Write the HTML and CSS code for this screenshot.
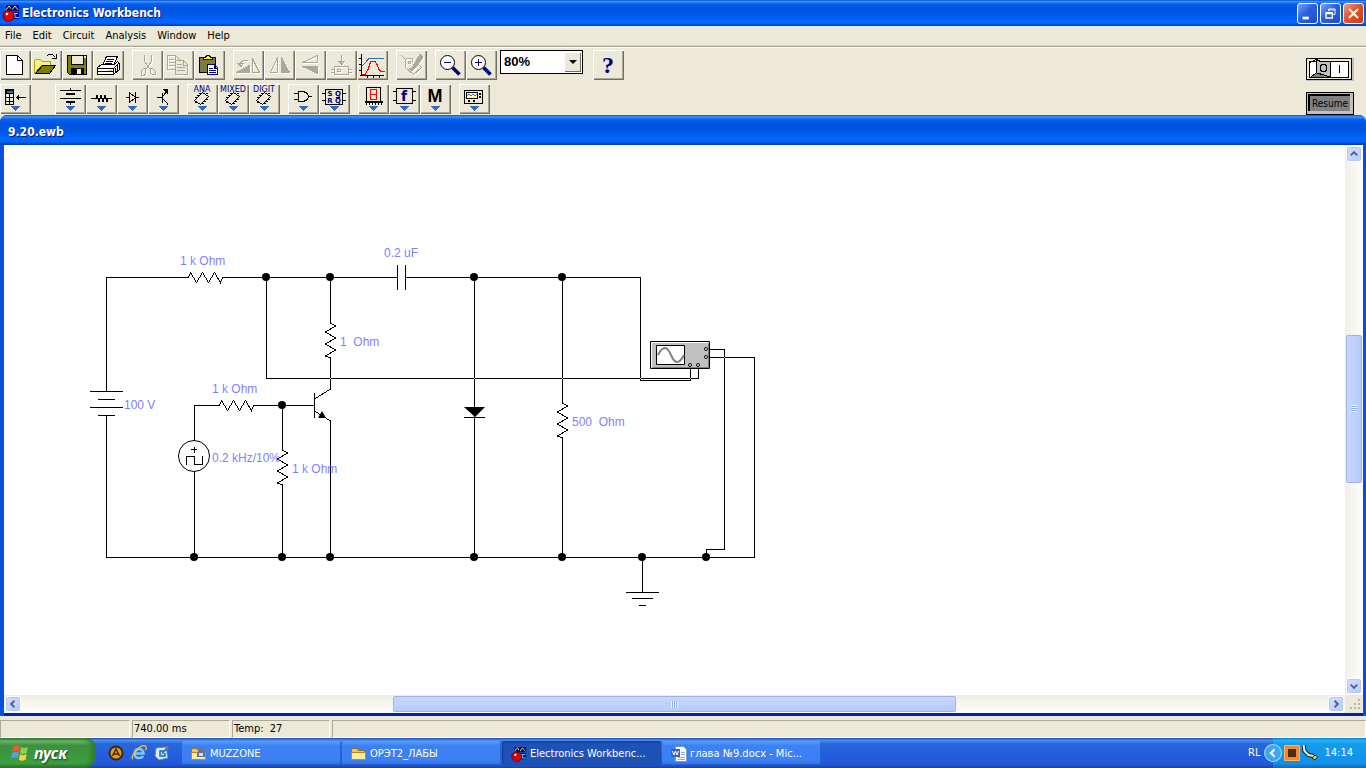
FILE: index.html
```html
<!DOCTYPE html>
<html lang="en">
<head>
<meta charset="utf-8">
<title>Electronics Workbench</title>
<link rel="stylesheet" href="styles.css">
</head>
<body>
<svg class="defs" aria-hidden="true">
  <defs>
    <symbol id="app" viewBox="0 0 18 18">
      <path fill="#000090" d="M4 1h13v6H4zM10 8h7v7h-7z"/>
      <path fill="none" stroke="#f0e838" d="M4 6l3-4 3 4 3-4 3 4"/>
      <path fill="none" stroke="#2ff" d="M10 9.500h3v4h4M13 9.500h3"/>
      <circle cx="6.500" cy="12" r="5.500" fill="#e00000" stroke="#700"/>
      <path stroke="#111" stroke-width="2" d="M7 7l3-2"/>
      <circle cx="5" cy="10" r="1.300" fill="#fff"/>
    </symbol>
    <symbol id="drop" viewBox="0 0 31 30"><path fill="#316ac5" d="M10 22h10l-5 5z"/></symbol>
    <symbol id="chip" viewBox="0 0 31 30">
      <path d="M7.500 16.500l8-8 6 4-8 8zM8 13.500h2M10 11.500h2M12 9.500h2M19 15.500h2M17 17.500h2M15 19.500h2M19 9.500h2M8 18.500h2"/>
    </symbol>
    <symbol id="folder" viewBox="0 0 18 16">
      <path fill="#f5c64c" stroke="#96701d" d="M1.500 13.500v-11h5l2 2h6v9z"/>
      <path fill="#ffec9b" stroke="#b68a27" d="M1.500 13.500v-7h14v7z"/>
    </symbol>
  </defs>
</svg>

<header class="titlebar">
  <svg class="app-icon" aria-hidden="true"><use href="#app"/></svg>
  <h1>Electronics Workbench</h1>
  <div class="win-controls">
    <button class="win" aria-label="Minimize"><svg viewBox="0 0 21 21"><path fill="#fff" d="M5 14h7v3H5z"/></svg></button>
    <button class="win" aria-label="Restore"><svg viewBox="0 0 21 21"><path fill="none" stroke="#fff" d="M8.500 8V5.500h7v6H13M8 6.500h8"/><path fill="none" stroke="#fff" stroke-width="1.500" d="M5.500 9.500h7v6h-7zM5 10.500h8"/></svg></button>
    <button class="win close" aria-label="Close"><svg viewBox="0 0 21 21"><path stroke="#fff" stroke-width="2.200" d="M5.500 5.500l10 10M15.500 5.500l-10 10"/></svg></button>
  </div>
</header>

<nav class="menubar">
  <button>File</button><button>Edit</button><button>Circuit</button><button>Analysis</button><button>Window</button><button>Help</button>
</nav>

<div class="tools">
  <div class="tool-rows">
    <div class="row">
      <div class="group">
        <button class="tool" aria-label="New"><svg viewBox="0 0 31 30"><path fill="#fff" d="M6.500 5.500h11l5 5v14h-16z"/><path d="M17.500 5.500v5h5"/></svg></button>
        <button class="tool" aria-label="Open"><svg viewBox="0 0 31 30"><path fill="#f7f08a" stroke="#b7a500" d="M3.500 23.500v-13l1-1h5l2 2h8v4h-9z"/><path fill="#808000" d="M4.500 23.500l7-8h13l-6 8z"/><path d="M15.500 6.500l2-2h4l3 3M25.500 4v5M21 8.500h5"/></svg></button>
        <button class="tool" aria-label="Save"><svg viewBox="0 0 31 30"><path fill="#808000" d="M5.500 5.500h19v19h-17l-2-2z"/><path fill="#ece9d8" d="M9.500 5.500h12v9h-12z"/><path fill="#000" d="M9 18h12v6H9z"/><path fill="#ece9d8" stroke="none" d="M15 19h4v5h-4zM22 6h2v2h-2z"/></svg></button>
        <button class="tool" aria-label="Print"><svg viewBox="0 0 31 30"><path fill="#fff" d="M9.500 15.500l4-9h11l-4 9z"/><path d="M14 9.500h7M13 11.500h7M12 13.500h7"/><path fill="#fff" d="M4.500 17.500l4-3h13l3-3 2 2v6l-6 5h-16z"/><path d="M4.500 18.500h16l5-5M20.500 18v6M5 21.500h15M22.500 23v-5M24.500 21v-6"/><path stroke="#d8c800" d="M16 20h3"/></svg></button>
      </div>
      <div class="group">
        <button class="tool dim" aria-label="Cut"><svg viewBox="0 0 31 30"><path d="M12.500 5v6l5 8M19.500 5v6l-5 8M9.500 20.500l2-2h2v5l-1 2h-3zM18.500 18.500h2l3 3v3h-3l-2-2z"/></svg></button>
        <button class="tool dim" aria-label="Copy"><svg viewBox="0 0 31 30"><path d="M4.500 5.500h8l4 4v10h-12zM12.500 6v4h4M6 9.500h5M6 12.500h8M6 15.500h8"/><path fill="#ece9d8" d="M12.500 10.500h8l4 4v10h-12z"/><path d="M20.500 11v4h4M14 14.500h5M14 17.500h8M14 20.500h8"/></svg></button>
        <button class="tool" aria-label="Paste"><svg viewBox="0 0 31 30"><path fill="#7d7c3e" d="M5.500 7.500h16v15h-16z"/><path fill="#ff0" d="M9.500 9.500v-2h2l1-2h3l1 2h2v2z"/><path fill="#fff" stroke="#00007b" d="M13.500 14.500h7l3 3v7h-10zM20.500 15v3h3M15 18.500h4M15 20.500h7M15 22.500h7"/></svg></button>
      </div>
      <div class="group">
        <button class="tool dim" aria-label="Rotate"><svg viewBox="0 0 31 30"><path class="fill" d="M3.500 22.500l13-7v7z"/><path d="M19.500 22.500v-14l7 14zM7.500 16v-3l3-3h4M5 13.500h5l-2 3z"/></svg></button>
        <button class="tool dim" aria-label="Flip horizontal"><svg viewBox="0 0 31 30"><path d="M6.500 22.500l7-15v15z"/><path class="fill" d="M17.500 7.500v15h8z"/></svg></button>
        <button class="tool dim" aria-label="Flip vertical"><svg viewBox="0 0 31 30"><path d="M7.500 12.500l15-7v7z"/><path class="fill" d="M7.500 16.500h15v7z"/></svg></button>
        <button class="tool dim" aria-label="Create subcircuit"><svg viewBox="0 0 31 30"><path d="M15.500 5v9M13 11.500h5l-2 3zM8.500 16.500h14v8h-14zM5 19.500h3M5 22.500h3M23 19.500h3M23 22.500h3M11.500 22v-3h3v3M12 21h3"/></svg></button>
        <button class="tool" aria-label="Analysis graphs"><svg viewBox="0 0 31 30"><path d="M4.500 4v22M3 25.500h24M2 8.500h2M2 14.500h2M2 20.500h2M10.500 26v2M16.500 26v2M22.500 26v2"/><path stroke="#316ac5" d="M5 16l7-7.500h15"/><path stroke="#f00" d="M5 24.500h3l3-5 2-6 1-2h4l2 3 2 5 2 2h4"/></svg></button>
      </div>
      <div class="group">
        <button class="tool dim" aria-label="Component properties"><svg viewBox="0 0 31 30"><path d="M5 5l4 4M9.500 8.500h7v4M9.500 8.500v9l8 7 8-7-3-3M12.500 11.500h2v2h-2z"/><path class="fill" d="M24 4l2 2v3l-6 8-4 4-3-3h3z"/></svg></button>
      </div>
      <div class="group">
        <button class="tool" aria-label="Zoom out"><svg class="smooth" viewBox="0 0 31 30"><path stroke="#00007b" stroke-width="3.500" d="M17.500 17.500l7 7"/><circle cx="12.500" cy="12.500" r="7" fill="#fff"/><path stroke="#00007b" d="M9 12.500h7"/></svg></button>
        <button class="tool" aria-label="Zoom in"><svg class="smooth" viewBox="0 0 31 30"><path stroke="#00007b" stroke-width="3.500" d="M17.500 17.500l7 7"/><circle cx="12.500" cy="12.500" r="7" fill="#fff"/><path stroke="#00007b" d="M9 12.500h7M12.500 9v7"/></svg></button>
      </div>
      <div class="zoom-box">
        <select aria-label="Zoom level"><option>80%</option><option>100%</option></select>
        <span class="zoom-arrow"></span>
      </div>
      <button class="tool" aria-label="Help"><svg viewBox="0 0 31 30"><text class="help-mark" x="15" y="23">?</text></svg></button>
    </div>

    <div class="row">
      <div class="group bin">
        <button class="tool" aria-label="Favorites"><svg viewBox="0 0 31 30"><path d="M5.500 5.500h8v15h-8z"/><path fill="#316ac5" d="M6 6h7v3H6z"/><path d="M5 9.500h9M5 13.500h9M5 17.500h9M9.500 9v12M16 13.500h10M18.500 11v5M17.500 12v3"/><use href="#drop"/></svg></button>
      </div>
      <div class="group">
        <button class="tool" aria-label="Sources"><svg viewBox="0 0 31 30"><path d="M15.500 4v2M5 6.500h21M5 14.500h21M15.500 18v3"/><path fill="#000" stroke="none" d="M11 9h9v2h-9zM11 17h9v2h-9z"/><use href="#drop"/></svg></button>
        <button class="tool" aria-label="Basic"><svg viewBox="0 0 31 30"><path d="M5 14.500h5l1-3 2 6 2-6 2 6 2-6 2 6 1-3h4"/><use href="#drop"/></svg></button>
        <button class="tool" aria-label="Diodes"><svg viewBox="0 0 31 30"><path d="M9 13.500h4M18 13.500h4M12.500 8.500v10l6-5zM18.500 8v11"/><use href="#drop"/></svg></button>
        <button class="tool" aria-label="Transistors"><svg viewBox="0 0 31 30"><path d="M9 13.500h5M14.500 9v10M15 12l5-6M15 15l4 4v2"/><path fill="#000" d="M15.500 5.500l4 4v-4z"/><use href="#drop"/></svg></button>
      </div>
      <div class="group">
        <button class="tool" aria-label="Analog ICs"><svg viewBox="0 0 31 30"><text class="tag" x="15" y="8">ANA</text><use href="#chip"/><use href="#drop"/></svg></button>
        <button class="tool" aria-label="Mixed ICs"><svg viewBox="0 0 31 30"><text class="tag" x="15" y="8">MIXED</text><use href="#chip"/><use href="#drop"/></svg></button>
        <button class="tool" aria-label="Digital ICs"><svg viewBox="0 0 31 30"><text class="tag" x="15" y="8">DIGIT</text><use href="#chip"/><use href="#drop"/></svg></button>
      </div>
      <div class="group">
        <button class="tool" aria-label="Logic gates"><svg viewBox="0 0 31 30"><path d="M6 9.500h4M6 15.500h4M10.500 7.500h5l4 2 1 3-1 3-4 2h-5zM20 12.500h4"/><use href="#drop"/></svg></button>
        <button class="tool" aria-label="Digital"><svg viewBox="0 0 31 30"><path d="M6.500 5.500h17v15h-17zM3 9.500h3M3 16.500h3M24 9.500h3M24 16.500h3M17 13.500h4"/><text class="cell" x="11" y="12">S</text><text class="cell" x="19" y="12">Q</text><text class="cell" x="11" y="19">R</text><text class="cell" x="19" y="19">Q</text><use href="#drop"/></svg></button>
      </div>
      <div class="group">
        <button class="tool" aria-label="Indicators"><svg viewBox="0 0 31 30"><path d="M8.500 3.500h14v14h-14z"/><path stroke="#f00" d="M12.500 5.500h6v10h-6zM12 10.500h7"/><path stroke-width="2" d="M7 18h18"/><path d="M8.500 18v3M11.500 18v3M14.500 18v3M17.500 18v3M20.500 18v3M23.500 18v3"/><use href="#drop"/></svg></button>
        <button class="tool" aria-label="Controls"><svg viewBox="0 0 31 30"><path d="M7.500 4.500h16v15h-16zM4 7.500h3M4 16.500h3M24 7.500h3M24 16.500h3"/><text class="fn" x="15" y="17">f</text><use href="#drop"/></svg></button>
        <button class="tool" aria-label="Miscellaneous"><svg viewBox="0 0 31 30"><text class="misc" x="15" y="18">M</text><use href="#drop"/></svg></button>
      </div>
      <div class="group">
        <button class="tool" aria-label="Instruments"><svg viewBox="0 0 31 30"><path d="M5.500 6.500h18v13h-18z"/><path fill="#ffffa0" d="M7.500 8.500h11v6h-11z"/><path stroke="#316ac5" d="M8 12l2-2 2 2 2-2 2 2 2-2"/><path stroke-width="2" d="M9 17h2M14 17h2M20 10h2M20 13h2"/><use href="#drop"/></svg></button>
      </div>
    </div>
  </div>

  <div class="power">
    <button class="switch" aria-label="Activate simulation"><svg viewBox="0 0 48 23"><path fill="#ece9d8" stroke="#000" d="M.5.500h45v21H.5z"/><path fill="#fff" stroke="#000" d="M3.500 3.500h39v16h-39z"/><path fill="#c0c0c0" stroke="#000" d="M10.500 1.500l4 2h10v16h-20l6-5z"/><path fill="#808080" d="M5 19l6-4 7 2 6 2z"/><path fill="none" stroke="#000" d="M3.500 19.500v-15l7-3v13l-6 5M11 15l7 2 6 2M33.500 7v8"/><circle cx="17.500" cy="10" r="3.500" fill="none" stroke="#000"/></svg></button>
    <button class="resume">Resume</button>
  </div>
</div>

<main class="doc">
  <h2>9.20.ewb</h2>
  <div class="doc-body">
    <div class="canvas">
      <svg class="circuit" viewBox="4 145 780 500" role="img" aria-label="Circuit schematic">
        <g class="wire">
          <path d="M106.500 391v-113.500h82l2-5 6 10 6-10 6 10 6-10 6 10 2-5h175M406 277.500h234.500v103h50v-12"/>
          <path d="M266.500 277v101.500h432v-10"/>
          <path d="M397.500 265v25M405.500 265v25"/>
          <path d="M330.500 277v46l5 3-10 6 10 6-10 6 10 6-10 6 5 2v31l-16 10"/>
          <path d="M314.500 393v25M314.500 411l16 10v136"/>
          <path d="M90 391.500h33M98 399.500h17M90 407.500h33M98 415.500h17M106.500 416v141.500h648v-200h-46"/>
          <path d="M194.500 441v-35.500h25l2-5 6 10 6-10 6 10 6-10 6 10 2-5h60"/>
          <path d="M194.500 471v86M282.500 405v45l5 3-10 6 10 6-10 6 10 6-10 6 5 2v72"/>
          <path d="M474.500 277v280M464 417.500h21M562.500 277v126l5 3-10 6 10 6-10 6 10 6-10 6 5 2v119"/>
          <path d="M708 349.500h16.500v200h-18v8M642.500 557v35.500M626 592.500h33M632 598.500h21M639 605.500h7"/>
          <path d="M191 449.500h6M194.500 447v6M186.500 465v-8.500h8v8h8v-8.500"/>
        </g>
        <circle class="source" cx="194" cy="456" r="15.500"/>
        <path d="M464 407h21l-10 10zM318 418h8l-4-7z"/>
        <g class="gap">
          <path d="M330 378h1v1h-1zM474 378h1v1h-1zM562 378h1v1h-1zM640 378h1v1h-1zM690 378h1v1h-1zM724 357h1v1h-1z"/>
        </g>
        <g>
          <circle cx="266" cy="277" r="4"/><circle cx="330" cy="277" r="4"/><circle cx="474" cy="277" r="4"/><circle cx="562" cy="277" r="4"/>
          <circle cx="282" cy="405" r="4"/><circle cx="194" cy="557" r="4"/><circle cx="282" cy="557" r="4"/><circle cx="330" cy="557" r="4"/>
          <circle cx="474" cy="557" r="4"/><circle cx="562" cy="557" r="4"/><circle cx="642" cy="557" r="4"/><circle cx="706" cy="557" r="4"/>
        </g>
        <g class="scope">
          <path fill="#c0c0c0" stroke="#000" d="M650.500 341.500h59v27h-59z"/>
          <path fill="none" stroke="#fff" d="M651.500 367v-24.500h57"/>
          <path fill="none" stroke="#808080" d="M653 367.500h55.500v-24"/>
          <path fill="#fff" stroke="#000" d="M656.500 345.500h28v19h-28z"/>
          <path fill="none" stroke="#808080" stroke-width="2" d="M658 355q7-14 13 0t13 0"/>
          <g fill="#fff" stroke="#000"><circle cx="706" cy="349" r="1.500"/><circle cx="706" cy="357" r="1.500"/><circle cx="690" cy="365" r="1.500"/><circle cx="698" cy="365" r="1.500"/></g>
        </g>
        <g class="value">
          <text x="180" y="265">1 k Ohm</text>
          <text x="384" y="257">0.2 uF</text>
          <text x="340" y="346">1&#160; Ohm</text>
          <text x="212" y="393">1 k Ohm</text>
          <text x="124" y="409">100 V</text>
          <text x="212" y="462">0.2 kHz/10%</text>
          <text x="292" y="473">1 k Ohm</text>
          <text x="572" y="426">500&#160; Ohm</text>
        </g>
      </svg>
    </div>
    <div class="scroll vertical">
      <button aria-label="Scroll up"><svg viewBox="0 0 15 15"><path d="M4 9l3.500-3.500L11 9"/></svg></button>
      <span class="before"></span><span class="thumb"><i></i></span><span class="after"></span>
      <button aria-label="Scroll down"><svg viewBox="0 0 15 15"><path d="M4 6l3.500 3.500L11 6"/></svg></button>
    </div>
    <div class="scroll horizontal">
      <button aria-label="Scroll left"><svg viewBox="0 0 15 15"><path d="M9 4L5.500 7.500 9 11"/></svg></button>
      <span class="before"></span><span class="thumb"><i></i></span><span class="after"></span>
      <button aria-label="Scroll right"><svg viewBox="0 0 15 15"><path d="M6 4l3.500 3.500L6 11"/></svg></button>
    </div>
    <div class="grip"><svg viewBox="0 0 18 18"><path fill="#b8b4a2" d="M13 4h2v2h-2zM9 8h2v2H9zM13 8h2v2h-2zM5 12h2v2H5zM9 12h2v2H9zM13 12h2v2h-2z"/></svg></div>
  </div>
</main>

<footer class="status">
  <span class="first"></span><span>740.00 ms</span><span>Temp:&#160; 27</span><span class="rest"></span>
</footer>

<div class="taskbar">
  <button class="start">
    <svg viewBox="0 0 18 18"><path fill="#f0592a" d="M3 3q3-2 6 0L8 8Q5 6 2 8z"/><path fill="#8fd14a" d="M10 3.500q3 2 6 0L15 9q-3 2-6 0z"/><path fill="#5c9cf5" d="M2 9q3-2 6 0l-1 5q-3-2-6 0z"/><path fill="#fbd03c" d="M9 10q3 2 6 0l-1 5q-3 2-6 0z"/></svg>
    <span>пуск</span>
  </button>
  <div class="quick">
    <button aria-label="Media player"><svg viewBox="0 0 16 16"><circle cx="8" cy="8" r="7.500" fill="#33291a"/><circle cx="8" cy="8" r="5.500" fill="#f49a12"/><path fill="none" stroke="#33291a" stroke-width="1.500" d="M4.500 11L8 4l3.500 7M6 9h4"/></svg></button>
    <button aria-label="Internet Explorer"><svg viewBox="0 0 16 16"><path fill="none" stroke="#7cc9ff" stroke-width="2.600" d="M4 8.500h8.500Q12 4 8 4T3.700 8.500 8 13q3 0 4-2"/><path fill="none" stroke="#f5c233" stroke-width="1.300" d="M2 14Q-1 13 5 6t9-5 0 4"/></svg></button>
    <button aria-label="Show desktop"><svg viewBox="0 0 16 16"><path fill="#d9edff" stroke="#4f8fc9" d="M2 3l10-1 2 11-9 2-4-4z"/><path fill="none" stroke="#1768b5" stroke-width="1.500" d="M10 6H6v5h5V8M8 9l5-6"/><path fill="#e5602c" d="M12 1l3 1-2 3z"/></svg></button>
  </div>
  <div class="tasks">
    <button><svg viewBox="0 0 18 16"><use href="#folder"/><path fill="#5574b8" d="M7 7l3-4V1h3v3l2 3v4H7z"/><path fill="#f4d9c0" d="M9 7h4v3H9z"/></svg><span>MUZZONE</span></button>
    <button><svg viewBox="0 0 18 16"><use href="#folder"/></svg><span>ОРЭТ2_ЛАБЫ</span></button>
    <button class="active"><svg viewBox="0 0 18 18"><use href="#app"/></svg><span>Electronics Workbenc...</span></button>
    <button><svg viewBox="0 0 18 16"><path fill="#fff" stroke="#8095bd" d="M5.500.500h8l3 3v12h-11z"/><path stroke="#8fa6d6" d="M11 6.500h4M11 8.500h4M8 11.500h7M8 13.500h7"/><path fill="#3d64b3" d="M1 3h9v8H1z"/><path fill="none" stroke="#fff" d="M2.500 5l1.500 4 1.500-4L7 9l1.500-4"/></svg><span>глава №9.docx - Mic...</span></button>
  </div>
  <span class="lang">RL</span>
  <div class="tray">
    <button class="expand" aria-label="Show hidden icons"><svg viewBox="0 0 17 17"><circle cx="8.500" cy="8.500" r="8" fill="#3ba5f2" stroke="#a8d8ff"/><path fill="none" stroke="#fff" stroke-width="2" d="M10 5L6.500 8.500 10 12"/></svg></button>
    <svg viewBox="0 0 16 16" aria-hidden="true"><path fill="#f58a2a" stroke="#ffb062" d="M.5.500h15v15H.5z"/><path fill="#4b2a17" d="M4 4h8v8H4z"/></svg>
    <svg viewBox="0 0 16 16" aria-hidden="true"><path fill="none" stroke="#111" stroke-width="4" d="M1.500 0l1 6 4 4 5 1"/><path fill="none" stroke="#e8e8e8" stroke-width="2.200" d="M1.500 0l1 6 4 4 5 1"/><path fill="#d8df3a" stroke="#222" d="M10 13l3-3 2.500 2-2.500 3z"/></svg>
    <time>14:14</time>
  </div>
</div>
</body>
</html>
```
FILE: styles.css
```css
* { box-sizing: border-box; }

body {
  margin: 0;
  height: 100vh;
  display: flex;
  flex-direction: column;
  overflow: hidden;
  background: #ece9d8;
  color: #000;
  font: 11px/14px "DejaVu Sans Condensed", "Noto Sans", sans-serif;
}

button {
  margin: 0;
  padding: 0;
  border: 0;
  background: none;
  color: inherit;
  font: inherit;
}

svg { display: block; }
.defs { position: absolute; width: 0; height: 0; }

/* Title bars */
.titlebar, .doc h2 {
  background: linear-gradient(#0a50d0 0, #3c93ff 6%, #0a62ee 14%, #0054e0 28%, #0058e8 55%, #0066fc 78%, #0066ff 88%, #0048cc 96%, #0038a8 100%);
  color: #fff;
  font: bold 12px/16px "DejaVu Sans Condensed", sans-serif;
  text-shadow: 1px 1px #0a1883;
}

.titlebar {
  flex: none;
  height: 26px;
  display: flex;
  align-items: center;
  padding: 0 2px;
}

.titlebar h1 {
  flex: 1;
  margin: 0 0 0 2px;
  font: inherit;
}

.app-icon { width: 18px; height: 18px; }
.win-controls { display: flex; gap: 2px; }

.win {
  width: 21px;
  height: 21px;
  border: 1px solid #fff;
  border-radius: 3px;
  background: linear-gradient(135deg, #7ea4f6, #2a60e0 45%, #1b4fd0);
}

.win svg { width: 19px; height: 19px; }
.close { background: linear-gradient(135deg, #f0a08a, #e0532c 45%, #c93a12); }

/* Menu */
.menubar {
  flex: none;
  height: 21px;
  display: flex;
  gap: 11px;
  padding: 0 5px;
  align-items: center;
  border-bottom: 1px solid #aca899;
  box-shadow: inset 0 -1px #c3d3ee;
}

/* Toolbars */
.tools {
  flex: none;
  display: flex;
  justify-content: space-between;
  padding-right: 12px;
  border-top: 1px solid #fff;
}

.tool-rows { padding: 2px 0 1px; }
.row { display: flex; gap: 8px; }
.row + .row { margin-top: 4px; }
.group { display: flex; }
.bin { margin-right: 16px; }

.tool {
  width: 31px;
  height: 30px;
  box-shadow: inset 1px 1px #fff, inset -1px -1px #716f64, inset -2px -2px #aca899;
}

.tool svg {
  width: 31px;
  height: 30px;
  fill: none;
  stroke: #000;
  shape-rendering: crispEdges;
}

.tool svg.smooth { shape-rendering: auto; }
.tool use[href="#drop"], .tool text { stroke: none; }
.tool text { text-anchor: middle; fill: #00007b; }
.dim svg { stroke: #aca899; filter: drop-shadow(1px 1px #fff); }
.dim .fill { fill: #aca899; }

.tool .help-mark { font: bold 24px "Liberation Serif", serif; }
.tool .tag { font: 8px "DejaVu Sans", sans-serif; }
.tool .cell { font: bold 7px "DejaVu Sans", sans-serif; }
.tool .fn { font: bold 14px "DejaVu Sans", sans-serif; }
.tool .misc { font: bold 18px "Liberation Sans", sans-serif; fill: #000; }

.zoom-box {
  position: relative;
  width: 83px;
  height: 24px;
  margin: 0 2px 0 -5px;
}

.zoom-box select {
  appearance: none;
  width: 100%;
  height: 100%;
  padding: 0 20px 2px 3px;
  border: 1px solid #000;
  border-radius: 0;
  background: #fff;
  color: #000;
  font: bold 13px "Liberation Sans", sans-serif;
}

.zoom-arrow {
  position: absolute;
  top: 2px;
  right: 2px;
  width: 17px;
  height: 20px;
  background: #ece9d8;
  box-shadow: inset 1px 1px #fff, inset -1px -1px #716f64;
  pointer-events: none;
}

.zoom-arrow::after {
  content: "";
  position: absolute;
  top: 8px;
  left: 5px;
  border: 4px solid transparent;
  border-top-color: #000;
  border-bottom: 0;
}

.power {
  display: flex;
  flex-direction: column;
  justify-content: space-between;
  padding-top: 10px;
}

.switch { width: 48px; height: 23px; background: #c0c0c0; }
.switch svg { width: 48px; height: 23px; shape-rendering: crispEdges; }

.resume {
  width: 48px;
  height: 23px;
  border: 1px solid #000;
  background: #808080;
  box-shadow: inset 1px 1px #c0c0c0, inset -3px -3px #c0c0c0, inset 3px 3px #000;
  font-size: 10px;
}

/* Document window */
.doc {
  flex: 1;
  min-height: 0;
  display: flex;
  flex-direction: column;
  border-radius: 7px 7px 0 0;
  overflow: hidden;
  background: #0a4fdc;
}

.doc h2 {
  flex: none;
  margin: 0;
  height: 30px;
  padding: 9px 8px 0;
}

.doc-body {
  flex: 1;
  min-height: 0;
  display: grid;
  grid-template: 1fr 18px / 1fr 18px;
  margin: 0 3px 0 4px;
  border-bottom: 3px solid #0022a8;
}

.canvas { min-width: 0; overflow: hidden; background: #fff; }
.circuit { width: 780px; height: 500px; }
.wire { fill: none; stroke: #000; shape-rendering: crispEdges; }
.gap { fill: #c8c8c8; }
.source { fill: none; stroke: #000; }
.value { fill: #8080ff; font: 12px "Liberation Sans", sans-serif; }

.scroll { display: flex; gap: 1px; padding: 1px; }
.vertical { flex-direction: column; background: linear-gradient(90deg, #f0eee6, #fefefb); }
.horizontal { background: linear-gradient(#f0eee6, #fefefb); }

.scroll button {
  flex: none;
  width: 16px;
  height: 16px;
  border: 1px solid #fff;
  border-radius: 3px;
  background: linear-gradient(135deg, #d5e0ff, #b4caf8);
  box-shadow: inset 0 0 0 1px #b6c8f2;
}

.scroll svg { width: 14px; height: 14px; fill: none; stroke: #4d6185; stroke-width: 2; }
.thumb {
  display: grid;
  place-items: center;
  border: 1px solid #9ab4ea;
  border-radius: 2px;
}
.vertical .thumb { flex: 148; background: linear-gradient(90deg, #c9d7fc, #b5cbfb); }
.vertical .before { flex: 173; }
.vertical .after { flex: 196; }
.horizontal .thumb { flex: 564; background: linear-gradient(#c9d7fc, #b5cbfb); }
.horizontal .before, .horizontal .after { flex: 372; }
.thumb i { width: 7px; height: 7px; }
.vertical i { background: repeating-linear-gradient(#eef4fe 0 1px, #8cb0f8 1px 2px); }
.horizontal i { background: repeating-linear-gradient(90deg, #eef4fe 0 1px, #8cb0f8 1px 2px); }
.grip { background: #ece9d8; }
.grip svg { width: 18px; height: 18px; }

/* Status bar */
.status {
  flex: none;
  height: 22px;
  display: flex;
  gap: 2px;
  padding-top: 4px;
}

.status span {
  width: 98px;
  padding: 1px;
  border: 1px solid;
  border-color: #aca899 #fff #fff #aca899;
}

.status .first { width: 130px; }
.status .rest { flex: 1; }

/* Taskbar */
.taskbar {
  flex: none;
  height: 30px;
  display: flex;
  align-items: center;
  background: linear-gradient(#1b4cb5 0, #4a90f0 8%, #2a68de 18%, #245cdc 60%, #225ad8 88%, #1941a5);
  color: #fff;
}

.start {
  width: 96px;
  height: 30px;
  display: flex;
  align-items: center;
  gap: 4px;
  padding: 0 0 0 10px;
  border-radius: 0 10px 12px 0;
  background: linear-gradient(#2f752f 0, #6cb76a 10%, #3d9040 25%, #3a9a3c 65%, #3fa040 85%, #2a6b2c);
  box-shadow: inset -4px 0 5px #2a7a2e;
  font: italic bold 16px/20px "Noto Sans", sans-serif;
  text-shadow: 1px 1px 2px #1c401c;
}

.start svg { width: 20px; height: 20px; }
.quick { display: flex; gap: 7px; padding: 0 12px; }
.quick svg { width: 16px; height: 16px; }
.tasks { display: flex; flex: 1; gap: 1px; min-width: 0; }

.tasks button {
  width: 159px;
  height: 24px;
  display: flex;
  align-items: center;
  gap: 2px;
  padding: 1px 8px 0;
  border-radius: 2px;
  background: linear-gradient(#5a9bfa, #3c81f3 20%, #3c81f3 80%, #3070e4);
  box-shadow: inset -1px -1px #2a62d0;
  white-space: nowrap;
}

.tasks .active { background: #1e52b7; box-shadow: inset 1px 1px 2px #123a8a; }
.tasks svg { flex: none; width: 18px; height: 16px; }
.lang { padding: 0 13px 0 6px; }

.tray {
  height: 30px;
  display: flex;
  align-items: center;
  gap: 2px;
  padding-right: 13px;
  background: linear-gradient(#0d7bd8 0, #22b4f5 8%, #159bee 20%, #1290e8 85%, #0d68b4);
}

.tray svg { width: 16px; height: 16px; }
.tray .expand { margin-left: -9px; }
.tray .expand svg { width: 18px; height: 18px; }
.tray time { margin-left: 4px; }
```
